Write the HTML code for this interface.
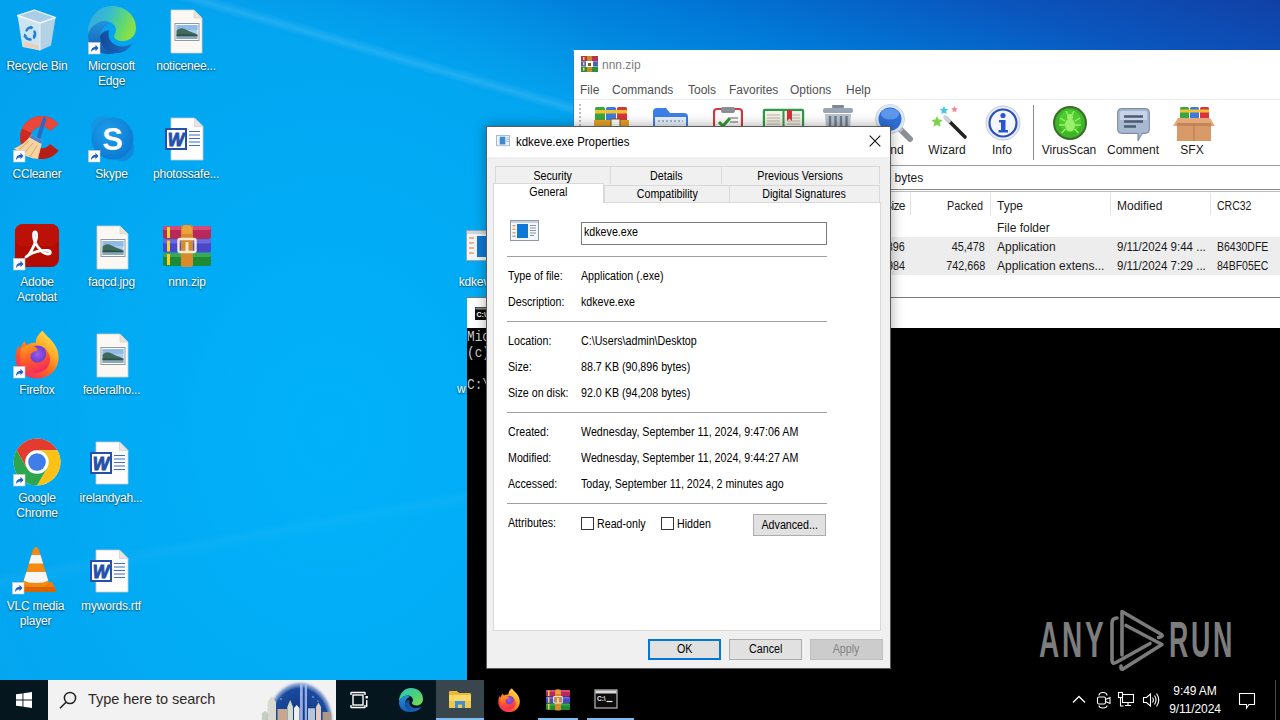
<!DOCTYPE html>
<html lang="en">
<head>
<meta charset="utf-8">
<title>kdkeve.exe Properties</title>
<style>
*{box-sizing:border-box;margin:0;padding:0}
html,body{width:1280px;height:720px;overflow:hidden}
body{position:relative;font-family:"Liberation Sans",sans-serif;font-size:12px;color:#000;
 background:
  linear-gradient(16.2deg, rgba(255,255,255,0) 70.6%, rgba(190,235,255,.16) 71.2%, rgba(255,255,255,0) 71.9%),
  linear-gradient(169.8deg, rgba(0,190,255,0) 60.3%, rgba(170,230,255,.05) 61.1%, rgba(0,190,255,.07) 62.2%, rgba(0,190,255,.07) 100%),
  radial-gradient(ellipse 420px 520px at 330px 430px, rgba(0,180,252,.9) 0%, rgba(0,178,250,0) 100%),
  linear-gradient(16.2deg, #04a3ee 0%, #03a2ee 70%, #0497e8 74%, #007ad8 83%, #0a56be 92%, #1140a6 100%);
}
.abs{position:absolute}
/* desktop icons */
.dico{position:absolute;width:76px;text-align:center;color:#fff;font-size:12px;line-height:15px;
 text-shadow:0 1px 1.500px rgba(0,0,0,.5),0 0 2px rgba(0,0,0,.28);letter-spacing:-.2px}
.dico svg text{text-shadow:none}
.dico svg{display:block;margin:0 auto 5px auto;overflow:visible}
/* taskbar */
#tb{position:absolute;left:0;top:680px;width:1280px;height:40px;background:#000;}
#tbl{position:absolute;left:0;top:0;width:467px;height:40px;background:#06161f}
#search{position:absolute;left:48px;top:0;width:288px;height:40px;background:#f2f2f2;overflow:hidden}
#search span{position:absolute;left:40px;top:11px;font-size:14.500px;color:#2b2b2b;letter-spacing:-.05px}
#tb2{position:absolute;left:0;top:680px;width:1280px;height:40px}
.clk{left:1160px;width:70px;text-align:center;color:#fff;font-size:12px;line-height:15px;white-space:nowrap;letter-spacing:-.1px}
#wm .w{position:absolute;top:611px;font-size:50.500px;line-height:57px;color:#7d7d7d;font-weight:bold;transform:scaleX(.53);transform-origin:0 50%;letter-spacing:5px;white-space:nowrap}
/* winrar */
#rar{position:absolute;left:573px;top:50px;width:720px;height:248px;background:#fff;border-left:1px solid #2a7fd8;border-top:1px solid #fff}
#rar .t{position:absolute;font-size:12px;color:#1a1a1a;white-space:nowrap}
#rar .m{top:32px;color:#505050}
#rar .r{transform:scaleX(.9);transform-origin:100% 50%}
#rar .d{transform:scaleX(.96);transform-origin:0 50%}
#rar .c{transform:scaleX(.875);transform-origin:0 50%}
#rar .tl{top:92px;width:70px;margin-left:-35px;text-align:center}
#rar .hs{top:142px;width:1px;height:22px;background:#e2e2e2}
/* console */
#con{position:absolute;left:467px;top:297px;width:830px;height:400px;background:#000;border-top:1px solid #7a7a7a}
#con .bar{position:absolute;left:0;top:0;right:0;height:30px;background:#fff}
#con pre{position:absolute;left:0;top:31px;font-family:"Liberation Mono",monospace;font-size:14.500px;line-height:16px;color:#ccc;transform:scaleX(.88);transform-origin:0 0}
/* dialog */
#dlg{position:absolute;left:486px;top:126px;width:405px;height:543px;background:#f0f0f0;border:1px solid #5a5a5a;box-shadow:0 0 12px rgba(0,0,0,.35);font-size:11px}
#dlg .title{position:absolute;left:0;top:0;right:0;height:30px;background:#fff}
#dlg .title span{position:absolute;left:29px;top:8px;font-size:12px;transform:scaleX(.955);transform-origin:0 50%;white-space:nowrap}
.tab{position:absolute;height:18px;background:#f0f0f0;border:1px solid #d9d9d9;border-bottom:none;text-align:center;font-size:12px;line-height:17px;white-space:nowrap}
#page{position:absolute;left:6px;top:75px;width:388px;height:429px;background:#fff;border:1px solid #d9d9d9}
.l,.v{position:absolute;font-size:12px;white-space:nowrap;transform-origin:0 50%;line-height:14px;transform:scaleX(.89)}
.sx{display:inline-block;transform:scaleX(.89);transform-origin:50% 50%}
.sep{position:absolute;left:20px;width:320px;height:1px;background:#a0a0a0}
.btn{position:absolute;width:73px;height:21px;background:#e1e1e1;border:1px solid #adadad;text-align:center;font-size:12px;line-height:19px}
.cb{position:absolute;width:13px;height:13px;background:#fff;border:1px solid #333}
</style>
</head>
<body>

<!-- DESKTOP-ICONS -->
<div class="dico" style="left:-1px;top:6px"><svg width="48" height="48" viewBox="0 0 48 48"><path d="M4.500 9.600 21.400 4 42.600 11.500 27 17z" fill="#a9cde6" stroke="#f4f9fc" stroke-width="1.200" stroke-linejoin="round"/><path d="M4.500 9.600 27 17V44.600L9.500 41z" fill="#dbe7f0" opacity=".93"/><path d="M27 17 42.600 11.500 38 39.600 27 44.600z" fill="#c2d5e4" opacity=".93"/><path d="M10.500 36 26 39.500V43.800L11 40.500z" fill="#f3c9ae" opacity=".8"/><path d="M4.500 9.600 27 17 42.600 11.500" fill="none" stroke="#f6fafd" stroke-width="1.300"/><path d="M27 17V44.600" stroke="#eef4f8" stroke-width=".8"/><g fill="none" stroke="#1f7fd6" stroke-width="2.400" stroke-linecap="round"><path d="M13.500 24.500q1.500-3.500 5-3"/><path d="M21.500 25.500q1.500 3 -.500 6"/><path d="M17.500 33.500q-4 0-5.500-3.500"/></g><path d="M17.500 19.500l3 2.200-3.300 1.800zM23.300 29.500l-2.600 2.800-1-3.600zM10.500 31l1-3.800 2.500 2.800z" fill="#1f7fd6"/></svg>Recycle Bin</div>
<div class="dico" style="left:73.5px;top:6px"><svg width="48" height="48" viewBox="0 0 48 48"><defs><linearGradient id="e1" x1="0" y1="0" x2="1" y2=".35"><stop offset="0" stop-color="#3aa4e2"/><stop offset=".45" stop-color="#35bcd0"/><stop offset=".8" stop-color="#5fd873"/><stop offset="1" stop-color="#86e04a"/></linearGradient><linearGradient id="e2" x1="0" y1="0" x2="0" y2="1"><stop offset="0" stop-color="#2592dc"/><stop offset="1" stop-color="#0f5cae"/></linearGradient><linearGradient id="e3" x1="0" y1="0" x2="1" y2="0"><stop offset="0" stop-color="#15499a"/><stop offset="1" stop-color="#1a74cc"/></linearGradient></defs><path d="M24 0C37 0 48 9 48 22c0 8-6 13-13 13-5 0-9-2-9-5 0-2 2-3 2-6 0-5-5-9-11-9C9 15 3 21 0 27 0 12 10 0 24 0z" fill="url(#e1)"/><path d="M17 15c-9 0-17 8-17 16 1 10 10 17 21 17 4 0 8-1 11-3-12 2-20-6-20-14 0-6 4-11 9-13-1-2-2-3-4-3z" fill="url(#e2)"/><path d="M12 31c0 10 9 17 19 16 6-1 11-5 14-10-4 3-10 4-15 3-7-2-11-8-9-16-5 1-9 4-9 7z" fill="url(#e3)"/><g transform="translate(0,36)"><rect x=".5" y=".5" width="11.5" height="11.5" fill="#fff" stroke="#c8c8c8" stroke-width=".6"/><path d="M3 10q0-5 4.500-5.200V2.800L10.500 6 7.500 9.200V7.200Q4.500 7.200 3 10z" fill="#1e5fc4"/></g></svg>Microsoft<br>Edge</div>
<div class="dico" style="left:148px;top:6px"><svg width="48" height="48" viewBox="0 0 48 48"><path d="M9 4h23l8 8v35H9z" fill="#fbf8f4" stroke="#d2cdc6" stroke-width=".8"/><path d="M32 4v8h8z" fill="#e9e2d8" stroke="#d2cdc6" stroke-width=".6"/><rect x="13" y="17.500" width="24" height="17" fill="#fff" stroke="#8f99a6" stroke-width="1"/><rect x="14.500" y="19" width="21" height="14" fill="#a9cdec"/><path d="M14.500 19h21v5h-21z" fill="#8fbbe6"/><path d="M14.500 24.500q4-3.500 8-1.500t13 5.500v1h-21z" fill="#3f6a5c"/><path d="M14.500 29h21v4h-21z" fill="#86a8b8"/><path d="M14.500 28.500q8-1 21 .8v.9h-21z" fill="#2f4f4a"/></svg>noticenee...</div>
<div class="dico" style="left:-1px;top:114px"><svg width="48" height="48" viewBox="0 0 48 48"><path d="M45.440 10.260A21.500 21.500 0 1 0 45.440 36.740L37.170 30.270A11 11 0 1 1 37.170 16.730z" fill="#cf2a20"/><path d="M45.440 10.260A21.500 21.500 0 0 0 9 14.500L18.500 19A11 11 0 0 1 37.170 16.730z" fill="#e8473a"/><path d="M45.440 36.740A21.500 21.500 0 0 1 20 43.200L24 33.500A11 11 0 0 0 37.170 30.270z" fill="#b81e18"/><path d="M31.500 5 25 26" stroke="#2a6bc2" stroke-width="3.800" stroke-linecap="round"/><path d="M18.500 20.500 29.500 26.500 25 45Q14 45 1 34.500 12 30 18.500 20.500z" fill="#f6d3a0"/><path d="M18.500 20.500 29.500 26.500 28.500 30 16.500 23.500z" fill="#3f86d6"/><path d="M6 35.500 16 27M11 39.500 20 29M17 43 24 31.500" stroke="#d9a868" stroke-width="1"/><g transform="translate(0,36)"><rect x=".5" y=".5" width="11.5" height="11.5" fill="#fff" stroke="#c8c8c8" stroke-width=".6"/><path d="M3 10q0-5 4.500-5.200V2.800L10.500 6 7.500 9.200V7.200Q4.500 7.200 3 10z" fill="#1e5fc4"/></g></svg>CCleaner</div>
<div class="dico" style="left:73.5px;top:114px"><svg width="48" height="48" viewBox="0 0 48 48"><defs><radialGradient id="sk" cx=".4" cy=".35" r=".75"><stop offset="0" stop-color="#1e9fea"/><stop offset="1" stop-color="#0874d0"/></radialGradient></defs><circle cx="15" cy="14" r="12" fill="#1596e2"/><circle cx="34" cy="35" r="12" fill="#0f8adc"/><circle cx="24.500" cy="24.500" r="21" fill="url(#sk)"/><text x="24.500" y="36" font-family="Liberation Sans,sans-serif" font-weight="bold" font-size="31" fill="#fff" text-anchor="middle">S</text><g transform="translate(0,36)"><rect x=".5" y=".5" width="11.5" height="11.5" fill="#fff" stroke="#c8c8c8" stroke-width=".6"/><path d="M3 10q0-5 4.500-5.200V2.800L10.500 6 7.500 9.200V7.200Q4.500 7.200 3 10z" fill="#1e5fc4"/></g></svg>Skype</div>
<div class="dico" style="left:148px;top:114px"><svg width="48" height="48" viewBox="0 0 48 48"><path d="M9 4h23.500l8.500 8.500V46H9z" fill="#fdfdfd" stroke="#c9c9c9" stroke-width=".8"/><path d="M32.500 4v8.500H41z" fill="#e6e6e6" stroke="#c9c9c9" stroke-width=".6"/><path d="M27 17.500h11M27 21h11M27 24.500h11M27 28h11M27 31.500h11" stroke="#3f6fc0" stroke-width="1.100"/><rect x="4" y="15" width="20" height="20" fill="#fdfdfd" stroke="#2450aa" stroke-width="2"/><text x="14" y="31.500" font-family="Liberation Sans,sans-serif" font-weight="bold" font-style="italic" font-size="17.500" fill="#2450aa" stroke="#2450aa" stroke-width=".9" text-anchor="middle">W</text></svg>photossafe...</div>
<div class="dico" style="left:-1px;top:222px"><svg width="48" height="48" viewBox="0 0 48 48"><rect x="2" y="2" width="44" height="43" rx="8" fill="#b30b00"/><rect x="2" y="2" width="44" height="22" rx="8" fill="#c2160c" opacity=".6"/><path d="M13 35c3-1 8-10 10-17 1-4 1-8-1-8s-2 5 0 10c3 7 9 12 13 12 3 0 3-3 0-3.500-6-1-17 2-22 6.500z" fill="none" stroke="#fff" stroke-width="2.800" stroke-linejoin="round"/><g transform="translate(0,36)"><rect x=".5" y=".5" width="11.5" height="11.5" fill="#fff" stroke="#c8c8c8" stroke-width=".6"/><path d="M3 10q0-5 4.500-5.200V2.800L10.500 6 7.500 9.200V7.200Q4.500 7.200 3 10z" fill="#1e5fc4"/></g></svg>Adobe<br>Acrobat</div>
<div class="dico" style="left:73.5px;top:222px"><svg width="48" height="48" viewBox="0 0 48 48"><path d="M9 4h23l8 8v35H9z" fill="#fbf8f4" stroke="#d2cdc6" stroke-width=".8"/><path d="M32 4v8h8z" fill="#e9e2d8" stroke="#d2cdc6" stroke-width=".6"/><rect x="13" y="17.500" width="24" height="17" fill="#fff" stroke="#8f99a6" stroke-width="1"/><rect x="14.500" y="19" width="21" height="14" fill="#a9cdec"/><path d="M14.500 19h21v5h-21z" fill="#8fbbe6"/><path d="M14.500 24.500q4-3.500 8-1.500t13 5.500v1h-21z" fill="#3f6a5c"/><path d="M14.500 29h21v4h-21z" fill="#86a8b8"/><path d="M14.500 28.500q8-1 21 .8v.9h-21z" fill="#2f4f4a"/></svg>faqcd.jpg</div>
<div class="dico" style="left:149px;top:222px"><svg width="48" height="48" viewBox="0 0 48 48"><rect x="0" y="4" width="48" height="13" rx="2" fill="#b8285a"/><rect x="0" y="4" width="48" height="4" rx="2" fill="#d44a78"/><rect x="0" y="17.500" width="48" height="13" rx="2" fill="#4a48c8"/><rect x="0" y="17.500" width="48" height="4" rx="2" fill="#6a6ae0"/><rect x="0" y="31" width="48" height="13" rx="2" fill="#1f8a34"/><rect x="0" y="31" width="48" height="4" rx="2" fill="#3aaa4e"/><rect x="4" y="5" width="3" height="11" fill="#f2d23a"/><rect x="4" y="18.500" width="3" height="11" fill="#f2d23a"/><rect x="4" y="32" width="3" height="11" fill="#f2d23a"/><rect x="18" y="3" width="12" height="42" rx="2" fill="#d98a2a"/><path d="M19 8q0-5 5-5t5 5v4H19z" fill="#e9a23c"/><rect x="15.500" y="17" width="17" height="13" rx="1.500" fill="none" stroke="#f4ead0" stroke-width="2.400"/><rect x="22.500" y="20" width="3" height="9" fill="#f4ead0"/></svg>nnn.zip</div>
<div class="dico" style="left:-1px;top:330px"><svg width="48" height="48" viewBox="0 0 48 48"><defs><linearGradient id="ff" x1=".85" y1=".05" x2=".2" y2=".95"><stop offset="0" stop-color="#ffe14a"/><stop offset=".3" stop-color="#ffb02a"/><stop offset=".6" stop-color="#ff6a1e"/><stop offset="1" stop-color="#ef2a68"/></linearGradient><linearGradient id="ff2" x1=".2" y1="0" x2=".6" y2="1"><stop offset="0" stop-color="#ff9a1e"/><stop offset=".5" stop-color="#ff5a26"/><stop offset="1" stop-color="#f02a62"/></linearGradient><radialGradient id="fp" cx=".5" cy=".4" r=".6"><stop offset="0" stop-color="#9a5cf0"/><stop offset="1" stop-color="#5a2fb8"/></radialGradient></defs><path d="M30 1C33 6 36 7 39 11c5 6 7 12 6.500 18C45 40 36 48.500 24 48.500S2.500 39.500 2.500 28c0-5 1-9 3.500-13 0 2 .5 3 1.500 4 .5-4 2-6 4.500-8 0 2 1 3 2 4 3-2 6-2.500 9-2-1-4 2-8 6-12z" fill="url(#ff)"/><circle cx="24.500" cy="26" r="10.500" fill="url(#fp)"/><path d="M8 19c4-4 10-4.500 15-1.500 2 1.500 2 3 0 3.500-3 .5-5 2-5.500 4.500-.5 4 3 7.500 7.500 7 4.500-.5 8-4 8-8.500 0-2-.5-4-1.500-5 4 3 6 7 5.500 12-1 7-7 12-14 12-8 0-15-6-15.500-14-.2-4 .0-6.500 .5-9.500z" fill="url(#ff2)"/><g transform="translate(0,36)"><rect x=".5" y=".5" width="11.5" height="11.5" fill="#fff" stroke="#c8c8c8" stroke-width=".6"/><path d="M3 10q0-5 4.500-5.200V2.800L10.500 6 7.500 9.200V7.200Q4.500 7.200 3 10z" fill="#1e5fc4"/></g></svg>Firefox</div>
<div class="dico" style="left:73.5px;top:330px"><svg width="48" height="48" viewBox="0 0 48 48"><path d="M9 4h23l8 8v35H9z" fill="#fbf8f4" stroke="#d2cdc6" stroke-width=".8"/><path d="M32 4v8h8z" fill="#e9e2d8" stroke="#d2cdc6" stroke-width=".6"/><rect x="13" y="17.500" width="24" height="17" fill="#fff" stroke="#8f99a6" stroke-width="1"/><rect x="14.500" y="19" width="21" height="14" fill="#a9cdec"/><path d="M14.500 19h21v5h-21z" fill="#8fbbe6"/><path d="M14.500 24.500q4-3.500 8-1.500t13 5.500v1h-21z" fill="#3f6a5c"/><path d="M14.500 29h21v4h-21z" fill="#86a8b8"/><path d="M14.500 28.500q8-1 21 .8v.9h-21z" fill="#2f4f4a"/></svg>federalho...</div>
<div class="dico" style="left:-1px;top:438px"><svg width="48" height="48" viewBox="0 0 48 48"><circle cx="24" cy="24" r="23.500" fill="#fff"/><path d="M3.650 12.250A23.500 23.500 0 0 1 44.350 12.250L24 12.250A11.750 11.750 0 0 0 13.820 29.875z" fill="#e33b2e"/><path d="M44.350 12.250A23.500 23.500 0 0 1 24 47.500L34.180 29.875A11.750 11.750 0 0 0 24 12.250z" fill="#fbc116"/><path d="M24 47.500A23.500 23.500 0 0 1 3.650 12.250L13.820 29.875A11.750 11.750 0 0 0 34.180 29.875z" fill="#2da44e"/><circle cx="24" cy="24" r="11" fill="#fff"/><circle cx="24" cy="24" r="8.800" fill="#3f7ee8"/><g transform="translate(0,36)"><rect x=".5" y=".5" width="11.5" height="11.5" fill="#fff" stroke="#c8c8c8" stroke-width=".6"/><path d="M3 10q0-5 4.500-5.200V2.800L10.500 6 7.500 9.200V7.200Q4.500 7.200 3 10z" fill="#1e5fc4"/></g></svg>Google<br>Chrome</div>
<div class="dico" style="left:73px;top:438px"><svg width="48" height="48" viewBox="0 0 48 48"><path d="M9 4h23.500l8.500 8.500V46H9z" fill="#fdfdfd" stroke="#c9c9c9" stroke-width=".8"/><path d="M32.500 4v8.500H41z" fill="#e6e6e6" stroke="#c9c9c9" stroke-width=".6"/><path d="M27 17.500h11M27 21h11M27 24.500h11M27 28h11M27 31.500h11" stroke="#3f6fc0" stroke-width="1.100"/><rect x="4" y="15" width="20" height="20" fill="#fdfdfd" stroke="#2450aa" stroke-width="2"/><text x="14" y="31.500" font-family="Liberation Sans,sans-serif" font-weight="bold" font-style="italic" font-size="17.500" fill="#2450aa" stroke="#2450aa" stroke-width=".9" text-anchor="middle">W</text></svg>irelandyah...</div>
<div class="dico" style="left:-2.5px;top:546px"><svg width="48" height="48" viewBox="0 0 48 48"><path d="M5 46q-2 0-1-2l4-8h32l4 8q1 2-1 2z" fill="#f07a0a"/><path d="M5 46q-2 0-1-2l1.500-3h37l1.500 3q1 2-1 2z" fill="#d96400"/><path d="M24 1q2 0 3 3l10 33q-3 4-13 4T11 37L21 4q1-3 3-3z" fill="#f58a12"/><path d="M19.500 9h9l2.600 8.500H16.900z" fill="#f6f6f6"/><path d="M14.300 26h19.400l2.500 8.500q-4 2.500-12.200 2.500t-12.200-2.500z" fill="#f6f6f6"/><g transform="translate(0,36)"><rect x=".5" y=".5" width="11.5" height="11.5" fill="#fff" stroke="#c8c8c8" stroke-width=".6"/><path d="M3 10q0-5 4.500-5.200V2.800L10.500 6 7.500 9.200V7.200Q4.500 7.200 3 10z" fill="#1e5fc4"/></g></svg>VLC media<br>player</div>
<div class="dico" style="left:73px;top:546px"><svg width="48" height="48" viewBox="0 0 48 48"><path d="M9 4h23.500l8.500 8.500V46H9z" fill="#fdfdfd" stroke="#c9c9c9" stroke-width=".8"/><path d="M32.500 4v8.500H41z" fill="#e6e6e6" stroke="#c9c9c9" stroke-width=".6"/><path d="M27 17.500h11M27 21h11M27 24.500h11M27 28h11M27 31.500h11" stroke="#3f6fc0" stroke-width="1.100"/><rect x="4" y="15" width="20" height="20" fill="#fdfdfd" stroke="#2450aa" stroke-width="2"/><text x="14" y="31.500" font-family="Liberation Sans,sans-serif" font-weight="bold" font-style="italic" font-size="17.500" fill="#2450aa" stroke="#2450aa" stroke-width=".9" text-anchor="middle">W</text></svg>mywords.rtf</div>
<div class="dico" style="left:450px;top:222px"><svg width="48" height="48" viewBox="0 0 48 48"><rect x="2.500" y="8.500" width="42" height="30" fill="#f1f4f8" stroke="#9aa4ae"/><rect x="3" y="9" width="41" height="3" fill="#cfd8e2"/><rect x="13" y="14" width="17" height="21" fill="#0f78d4"/><path d="M5 16h5M5 21h5M5 26h5M5 31h5" stroke="#e8a064" stroke-width="1.600"/><path d="M33 16h9M33 19.500h9M33 23h9M33 26.500h9M33 30h6" stroke="#8b949e" stroke-width="1.200"/></svg>kdkeve.exe</div>
<div class="dico" id="wlab" style="left:457px;top:382px;width:auto;text-align:left">w</div>
<!-- /DESKTOP-ICONS -->

<!-- WINRAR -->
<div id="rar">

<svg class="abs" style="left:7px;top:5px" width="17" height="16" viewBox="0 0 17 16"><rect x="0" y="0" width="17" height="5" fill="#b8324a"/><rect x="0" y="5.3" width="17" height="5" fill="#4a5fc0"/><rect x="0" y="10.6" width="17" height="5.4" fill="#2f8f3c"/><rect x="6" y="0" width="5" height="16" fill="#c98a2a"/><rect x="5" y="5" width="7" height="6" fill="#fff"/><rect x="7" y="7" width="3" height="3" fill="#7a5a20"/><rect x="2" y="1" width="1.5" height="3" fill="#ffd86b"/><rect x="2" y="6.3" width="1.5" height="3" fill="#ffd86b"/><rect x="2" y="11.6" width="1.5" height="3" fill="#ffd86b"/></svg>
<div class="t" style="left:28px;top:7px;color:#7d7d7d;font-size:12px">nnn.zip</div>
<div class="t m" style="left:6px">File</div><div class="t m" style="left:38px">Commands</div><div class="t m" style="left:114px">Tools</div><div class="t m" style="left:155px">Favorites</div><div class="t m" style="left:216px">Options</div><div class="t m" style="left:272px">Help</div>
<div class="abs" style="left:0;top:48px;width:720px;height:1px;background:#ececec"></div>
<div class="abs" style="left:5px;top:53px;width:2px;height:58px;background:repeating-linear-gradient(#bdbdbd 0 2px,#fff 2px 4px)"></div>

<svg class="abs" style="left:20px;top:55px" width="36" height="36" viewBox="0 0 36 36"><rect x="1" y="1" width="10" height="22" rx="1.5" fill="#3aa63f"/><rect x="12" y="1" width="10" height="22" rx="1.5" fill="#3b7be0"/><rect x="23" y="1" width="10" height="22" rx="1.5" fill="#d8343f"/><rect x="1" y="4" width="32" height="3.5" fill="#f2c230"/><rect x="0" y="14" width="35" height="8" fill="#e8a326"/><rect x="0" y="23" width="35" height="11" fill="#d88a1e"/><rect x="17" y="13" width="9" height="8" fill="#fff" stroke="#7a5a20"/></svg>
<svg class="abs" style="left:78px;top:55px" width="37" height="36" viewBox="0 0 37 36"><path d="M1 6q0-4 4-4h9l4 5h14q4 0 4 4v22H1z" fill="#3d7fe6"/><rect x="3" y="11" width="31" height="9" fill="#e8f2ff"/><path d="M6 15h25" stroke="#8aa" stroke-width="1.5" stroke-dasharray="2 2"/><rect x="1" y="20" width="35" height="14" fill="#5b9bf5"/></svg>
<svg class="abs" style="left:139px;top:56px" width="30" height="36" viewBox="0 0 30 36"><rect x="1" y="2" width="28" height="33" rx="3" fill="#fff" stroke="#d23a3f" stroke-width="2.2"/><rect x="8" y="0" width="14" height="6" rx="2" fill="#8a8f96"/><path d="M6 15l4 4 7-8" stroke="#3a9a36" stroke-width="3" fill="none"/><path d="M17 11h8M17 15h8" stroke="#999" stroke-width="1.3"/></svg>
<svg class="abs" style="left:188px;top:57px" width="43" height="34" viewBox="0 0 43 34"><rect x=".8" y=".8" width="41.4" height="32" rx="2" fill="#2e9a48"/><rect x="3" y="3" width="17.5" height="28" fill="#f4f1e6"/><rect x="22.500" y="3" width="17.5" height="28" fill="#f4f1e6"/><path d="M5 7h13M5 10h13M5 13h13M5 16h13M25 7h13M25 10h13M25 13h13M25 16h13" stroke="#b9b5a5" stroke-width="1"/><path d="M25 2h5v11l-2.500-2.500L25 13z" fill="#d62f3a"/></svg>
<svg class="abs" style="left:248px;top:54px" width="32" height="38" viewBox="0 0 32 38"><rect x="10" y="0" width="12" height="3" rx="1" fill="#7f8a96"/><rect x="1" y="3" width="30" height="5" rx="2" fill="#9aa6b3"/><path d="M3 9h26l-2 28H5z" fill="#b9c3ce"/><path d="M8 11v24M13.500 11v24M19 11v24M24.500 11v24" stroke="#6f7b88" stroke-width="2.4"/></svg>
<svg class="abs" style="left:299px;top:52px" width="42" height="40" viewBox="0 0 42 40"><path d="M26 25l11 11" stroke="#8b8f96" stroke-width="6" stroke-linecap="round"/><path d="M24 23l5 5" stroke="#b9bec6" stroke-width="4"/><circle cx="17" cy="16" r="14.500" fill="#dfe9f7" stroke="#c9d4e4" stroke-width="1"/><circle cx="17" cy="16" r="11.500" fill="#2f6fd6"/><ellipse cx="17" cy="11" rx="9" ry="5.500" fill="#5f98ea"/></svg>
<svg class="abs" style="left:353px;top:54px" width="42" height="36" viewBox="0 0 42 36"><path d="M19 13l19 19" stroke="#222" stroke-width="3.600" stroke-linecap="round"/><path d="M18 12l4 4" stroke="#d0d4da" stroke-width="3.800" stroke-linecap="round"/><path d="M10 11l1.700 3.600 3.900.5-2.900 2.700.8 3.900L10 19.800 6.500 21.700l.8-3.900-2.900-2.700 3.900-.5z" fill="#7fd24a"/><path d="M17 1l1.300 2.700 3 .4-2.200 2 .6 3L17 7.700l-2.700 1.400.6-3-2.200-2 3-.4z" fill="#47c6e8"/><path d="M27.500 1l1 2.100 2.300.3-1.700 1.600.4 2.300-2-1.100-2 1.100.4-2.300-1.700-1.600 2.300-.3z" fill="#f08aa0"/></svg>
<svg class="abs" style="left:411px;top:54px" width="36" height="36" viewBox="0 0 36 36"><circle cx="18" cy="18" r="17" fill="#e6ebf5" stroke="#c2cbe0" stroke-width="1"/><circle cx="18" cy="18" r="13.500" fill="#f4f7fd" stroke="#2d4fb8" stroke-width="2.200"/><circle cx="18" cy="10.500" r="2.600" fill="#2a55d0"/><path d="M14 15h6.500v10H23v2.500H13.500V25H16v-7.500h-2z" fill="#2a55d0"/></svg>
<svg class="abs" style="left:478px;top:54px" width="36" height="36" viewBox="0 0 36 36"><circle cx="18" cy="18" r="17" fill="#3a6b2a"/><circle cx="18" cy="18" r="15" fill="#3fb52a"/><circle cx="18" cy="16" r="11" fill="#58d436" opacity=".7"/><ellipse cx="18" cy="20" rx="5" ry="6.500" fill="#9af06a"/><circle cx="18" cy="12" r="3" fill="#9af06a"/><path d="M13 16l-5-3M23 16l5-3M13 20H7M23 20h6M13.500 24l-4 4M22.500 24l4 4M16 10l-2-4M20 10l2-4" stroke="#9af06a" stroke-width="1.400"/></svg>
<svg class="abs" style="left:543px;top:57px" width="33" height="34" viewBox="0 0 33 34"><path d="M5 .7h23q4.300 0 4.300 4.300v16q0 4.300-4.300 4.300h-3l-4 7.500V25.300H5q-4.300 0-4.300-4.300V5Q.7.700 5 .7z" fill="#a9b9d2" stroke="#7e8fae" stroke-width="1.200"/><path d="M5 3h23q2 0 2 2v7H3V5q0-2 2-2z" fill="#c7d3e6"/><path d="M7 8.500h19M7 13.500h19M7 18.500h12" stroke="#4c5a73" stroke-width="2.400"/></svg>
<svg class="abs" style="left:598px;top:55px" width="44" height="36" viewBox="0 0 44 36"><rect x="8" y="1" width="9" height="14" rx="1.500" fill="#3aa63f"/><rect x="18" y="1" width="9" height="14" rx="1.500" fill="#3b7be0"/><rect x="28" y="1" width="9" height="14" rx="1.500" fill="#d8343f"/><rect x="8" y="3.500" width="29" height="3" fill="#f2c230"/><path d="M6 12h32l5 8H1z" fill="#e2a878"/><rect x="5" y="17" width="34" height="18" fill="#d99a6a"/><rect x="5" y="17" width="34" height="3" fill="#c5855a"/><path d="M22 17v18" stroke="#b87850" stroke-width="1"/></svg>

<div class="t tl" style="left:318px">Find</div><div class="t tl" style="left:373px">Wizard</div><div class="t tl" style="left:428px">Info</div><div class="t tl" style="left:495px">VirusScan</div><div class="t tl" style="left:559px">Comment</div><div class="t tl" style="left:618px">SFX</div>
<div class="abs" style="left:459px;top:54px;width:1px;height:55px;background:#8c8c8c"></div>
<div class="abs" style="left:0;top:114px;width:720px;height:1px;background:#9a9a9a"></div>
<div class="t" style="left:310.500px;top:120px">0 bytes</div>
<div class="abs" style="left:0;top:138px;width:720px;height:1px;background:#8a8a8a"></div>
<div class="abs" style="left:0;top:140px;width:720px;height:1px;background:#bdbdbd"></div>
<div class="abs" style="left:0;top:186px;width:720px;height:38px;background:#ededed"></div>
<div class="abs hs" style="left:336px"></div><div class="abs hs" style="left:416px"></div><div class="abs hs" style="left:536px"></div><div class="abs hs" style="left:636px"></div>
<div class="t" style="left:310px;top:148px;letter-spacing:-.6px">Size</div><div class="t r" style="right:310px;top:148px">Packed</div><div class="t" style="left:423px;top:148px">Type</div><div class="t" style="left:543px;top:148px">Modified</div><div class="t c" style="left:643px;top:148px">CRC32</div>
<div class="t" style="left:423px;top:170px">File folder</div>
<div class="t r" style="right:388px;top:189px">90,896</div><div class="t r" style="right:308px;top:189px">45,478</div><div class="t" style="left:423px;top:189px">Application</div><div class="t d" style="left:543px;top:189px">9/11/2024 9:44 ...</div><div class="t c" style="left:643px;top:189px">B6430DFE</div>
<div class="t r" style="right:388px;top:208px">984</div><div class="t r" style="right:308px;top:208px">742,668</div><div class="t" style="left:423px;top:208px">Application extens...</div><div class="t d" style="left:543px;top:208px">9/11/2024 7:29 ...</div><div class="t c" style="left:643px;top:208px">84BF05EC</div>

</div>

<!-- CONSOLE -->
<div id="con"><div class="bar"><svg class="abs" style="left:8px;top:9px" width="16" height="13" viewBox="0 0 16 13"><rect width="16" height="13" fill="#0c0c0c"/><rect x=".5" y=".5" width="15" height="2" fill="#8a8a8a"/><text x="1.500" y="10" font-family="Liberation Sans,sans-serif" font-size="7" font-weight="bold" fill="#fff">C:\</text></svg></div>
<pre>Microsoft Windows
(c) Microsoft

C:\Users</pre></div>

<!-- DIALOG -->
<div id="dlg">

<div class="title"><svg class="abs" style="left:9px;top:8px" width="14" height="12" viewBox="0 0 15 14" preserveAspectRatio="none" opacity=".85"><rect x=".5" y=".5" width="14" height="12" fill="#e8f1fa" stroke="#9aa7b4"/><rect x="4" y="2" width="6" height="9" fill="#1976d2"/><rect x="11" y="3" width="3" height="1" fill="#9aa7b4"/><rect x="11" y="5" width="3" height="1" fill="#9aa7b4"/><rect x="11" y="7" width="3" height="1" fill="#9aa7b4"/></svg><span>kdkeve.exe Properties</span>
<svg class="abs" style="left:382px;top:8px" width="12" height="12" viewBox="0 0 12 12"><path d="M.7.7 11.3 11.3M11.3.7.7 11.3" stroke="#111" stroke-width="1.1" fill="none"/></svg></div>
<div class="tab" style="left:8px;top:39px;width:116px;padding-top:1px"><span class="sx">Security</span></div>
<div class="tab" style="left:123px;top:39px;width:112px;padding-top:1px"><span class="sx">Details</span></div>
<div class="tab" style="left:234px;top:39px;width:159px;padding-top:1px"><span class="sx">Previous Versions</span></div>
<div class="tab" style="left:117px;top:58px;width:126px"><span class="sx">Compatibility</span></div>
<div class="tab" style="left:242px;top:58px;width:151px"><span class="sx">Digital Signatures</span></div>
<div id="page"></div>
<div class="tab" style="left:6px;top:56px;width:111px;height:20px;background:#fff;line-height:16px"><span class="sx">General</span></div>
<svg class="abs" style="left:23px;top:93px" width="29" height="22" viewBox="0 0 29 22"><rect x=".5" y=".5" width="28" height="20" fill="#f3f6fa" stroke="#8e99a5"/><rect x="1" y="1" width="27" height="2" fill="#c9d3de"/><rect x="7" y="4" width="11" height="14" fill="#0f78d4"/><rect x="2.5" y="5" width="3" height="1.5" fill="#e8a064"/><rect x="2.5" y="8.5" width="3" height="1.5" fill="#e8a064"/><rect x="2.5" y="12" width="3" height="1.5" fill="#e8a064"/><rect x="2.5" y="15.5" width="3" height="1.5" fill="#9ab"/><rect x="20" y="5" width="6" height="1" fill="#8b949e"/><rect x="20" y="7.5" width="6" height="1" fill="#8b949e"/><rect x="20" y="10" width="6" height="1" fill="#8b949e"/><rect x="20" y="12.5" width="6" height="1" fill="#8b949e"/><rect x="20" y="15" width="4" height="1" fill="#8b949e"/></svg>
<div class="abs" style="left:94px;top:95px;width:246px;height:23px;background:#fff;border:1px solid #7a7a7a"></div>
<div class="v" style="left:97px;top:98px">kdkeve.exe</div>
<div class="sep" style="top:129px"></div>
<div class="l" style="left:21px;top:142px">Type of file:</div><div class="v" style="left:94px;top:142px">Application (.exe)</div>
<div class="l" style="left:21px;top:168px">Description:</div><div class="v" style="left:94px;top:168px">kdkeve.exe</div>
<div class="sep" style="top:194px"></div>
<div class="l" style="left:21px;top:207px">Location:</div><div class="v" style="left:94px;top:207px">C:\Users\admin\Desktop</div>
<div class="l" style="left:21px;top:233px">Size:</div><div class="v" style="left:94px;top:233px">88.7 KB (90,896 bytes)</div>
<div class="l" style="left:21px;top:259px">Size on disk:</div><div class="v" style="left:94px;top:259px">92.0 KB (94,208 bytes)</div>
<div class="sep" style="top:285px"></div>
<div class="l" style="left:21px;top:298px">Created:</div><div class="v" style="left:94px;top:298px">Wednesday, September 11, 2024, 9:47:06 AM</div>
<div class="l" style="left:21px;top:324px">Modified:</div><div class="v" style="left:94px;top:324px">Wednesday, September 11, 2024, 9:44:27 AM</div>
<div class="l" style="left:21px;top:350px">Accessed:</div><div class="v" style="left:94px;top:350px">Today, September 11, 2024, 2 minutes ago</div>
<div class="sep" style="top:376px"></div>
<div class="l" style="left:21px;top:389px">Attributes:</div>
<div class="cb" style="left:94px;top:390px"></div><div class="v" style="left:110px;top:390px">Read-only</div>
<div class="cb" style="left:174px;top:390px"></div><div class="v" style="left:190px;top:390px">Hidden</div>
<div class="btn" style="left:266px;top:387px;height:22px;line-height:20px"><span class="sx">Advanced...</span></div>
<div class="btn" style="left:161px;top:512px;border:2px solid #0078d7;line-height:17px"><span class="sx">OK</span></div>
<div class="btn" style="left:242px;top:512px"><span class="sx">Cancel</span></div>
<div class="btn" style="left:323px;top:512px;background:#cccccc;border-color:#bfbfbf;color:#838383"><span class="sx">Apply</span></div>

</div>

<!-- WATERMARK -->
<div id="wm">
<div class="w" style="left:1038.500px;transform:scaleX(.555)">ANY</div>
<svg class="abs" style="left:1108px;top:608px" width="58" height="66" viewBox="0 0 58 66"><g fill="none" stroke="#7b7b7b" stroke-width="3.600" stroke-linejoin="round" stroke-linecap="round"><path d="M14 47V3.500L53.500 26.500Q55.500 28.500 50.500 29.500"/><path d="M18 17.500 54 36.500 15 61Q12.500 62 13 58"/><path d="M9 10Q4 10 4 15V52Q4 56.500 8 54.500L42 35.500"/></g></svg>
<div class="w" style="left:1169px">RUN</div>
</div>

<!-- TASKBAR -->
<div id="tb"><div id="tbl"></div>
<div id="search"><span>Type here to search</span></div>

<svg class="abs" style="left:16px;top:12px" width="16" height="16" viewBox="0 0 16 16"><path d="M0 2.300 6.500 1.400V7.500H0zM7.400 1.300 16 0V7.500H7.400zM0 8.400H6.500V14.600L0 13.700zM7.400 8.400H16V16L7.400 14.700z" fill="#fff"/></svg>
<svg class="abs" style="left:593px;top:9px" width="26" height="22" viewBox="0 0 26 22"><rect x="2" y="1" width="22" height="18" fill="#0c0c0c" stroke="#b9b9b9" stroke-width="1.200"/><rect x="2.500" y="1.500" width="21" height="3" fill="#d8d8d8"/><text x="4" y="12" font-family="Liberation Sans,sans-serif" font-size="6.500" font-weight="bold" fill="#e8e8e8">C:\</text><path d="M13.500 12.500h6" stroke="#eee" stroke-width="1.200"/></svg>

<svg class="abs" style="left:58px;top:10px" width="20" height="20" viewBox="0 0 20 20"><circle cx="12" cy="8" r="5.600" fill="none" stroke="#222" stroke-width="1.500"/><path d="M8 12.200 2 18.200" stroke="#222" stroke-width="1.600"/></svg>
<svg class="abs" style="left:258px;top:0" width="78" height="40" viewBox="0 0 78 40"><defs><radialGradient id="cty" cx="42" cy="42" r="42" gradientUnits="userSpaceOnUse" gradientTransform="translate(42 42) scale(.83 1) translate(-42 -42)"><stop offset="0" stop-color="#10347e"/><stop offset=".8" stop-color="#1a4a9e"/><stop offset=".9" stop-color="#5f84c4" stop-opacity=".7"/><stop offset="1" stop-color="#f2f2f2" stop-opacity="0"/></radialGradient></defs><rect width="78" height="40" fill="url(#cty)"/><path d="M42 4h2.800v36H42zM46.700 4H49v36h-2.300z" fill="#a3b8ea" opacity=".9"/><path d="M9.600 40V22l4.200-6 4.200 6v18z" fill="#d9d9d2"/><rect x="19.500" y="29" width="9.500" height="11" fill="#c8a78e"/><path d="M29.300 40V27l2.850-7 2.850 7v13z" fill="#d4dccc"/><path d="M36 40V28l2.750-3 2.750 3v12z" fill="#eef0f2"/><rect x="50" y="28.300" width="7" height="11.700" fill="#b4c6d8"/><path d="M58 40V27l2.500-4.500L63 27v13z" fill="#e2cbbb"/><rect x="64.500" y="32" width="8.500" height="8" fill="#ad9684"/><path d="M4 40V33l3-2 3 2v7z" fill="#b9c4b4" opacity=".8"/><circle cx="23" cy="19" r=".7" fill="#cfe0ff"/><circle cx="18" cy="12" r=".6" fill="#cfe0ff"/><circle cx="55" cy="17" r=".7" fill="#cfe0ff"/><circle cx="60" cy="21" r=".6" fill="#cfe0ff"/></svg>
</div><div id="tb2">
<svg class="abs" style="left:350px;top:10px" width="20" height="20" viewBox="0 0 20 20"><g fill="none" stroke="#fff" stroke-width="1.400"><rect x="3" y="5" width="10" height="10"/><path d="M1 2.500H15M1 17.500H15"/></g><rect x="15.500" y="6" width="2.400" height="2.400" fill="#fff"/><path d="M16.700 10v7" stroke="#fff" stroke-width="1.400"/><path d="M1 2v3M15 2v3M1 15v3M15 15v3" stroke="#fff" stroke-width="1.400"/></svg>
<svg class="abs" style="left:399px;top:8px" width="24" height="24" viewBox="0 0 48 48"><defs><linearGradient id="te1" x1="0" y1="0" x2="1" y2="1"><stop offset="0" stop-color="#2fc4c0"/><stop offset=".55" stop-color="#4bd07c"/><stop offset="1" stop-color="#86dd4a"/></linearGradient><linearGradient id="te2" x1="0" y1="0" x2="0" y2="1"><stop offset="0" stop-color="#2592dc"/><stop offset="1" stop-color="#0f5cae"/></linearGradient><linearGradient id="te3" x1="0" y1="0" x2="1" y2="0"><stop offset="0" stop-color="#15499a"/><stop offset="1" stop-color="#1a74cc"/></linearGradient></defs><path d="M24 0C37 0 48 9 48 22c0 8-6 13-13 13-5 0-9-2-9-5 0-2 2-3 2-6 0-5-5-9-11-9C9 15 3 21 0 27 0 12 10 0 24 0z" fill="url(#te1)"/><path d="M17 15c-9 0-17 8-17 16 1 10 10 17 21 17 4 0 8-1 11-3-12 2-20-6-20-14 0-6 4-11 9-13-1-2-2-3-4-3z" fill="url(#te2)"/><path d="M12 31c0 10 9 17 19 16 6-1 11-5 14-10-4 3-10 4-15 3-7-2-11-8-9-16-5 1-9 4-9 7z" fill="url(#te3)"/></svg>
<div class="abs" style="left:436px;top:0;width:48px;height:40px;background:#3a464d"></div>
<div class="abs" style="left:436px;top:38px;width:48px;height:2px;background:#7fbdf0"></div>
<svg class="abs" style="left:448px;top:10px" width="24" height="20" viewBox="0 0 24 20"><path d="M1 2q0-1 1-1h7l2 2h11q1 0 1 1v14H1z" fill="#e8b83a"/><rect x="1" y="5" width="22" height="13" rx=".8" fill="#f9d868"/><rect x="1" y="11" width="22" height="7" fill="#f2c84a"/><path d="M7 11h10v7h-3v-3.500h-4V18H7z" fill="#3f8fd8"/></svg>
<svg class="abs" style="left:497px;top:8px" width="24" height="24" viewBox="0 0 48 48"><defs><linearGradient id="tff" x1=".85" y1=".05" x2=".2" y2=".95"><stop offset="0" stop-color="#ffe14a"/><stop offset=".3" stop-color="#ffb02a"/><stop offset=".6" stop-color="#ff6a1e"/><stop offset="1" stop-color="#ef2a68"/></linearGradient><linearGradient id="tff2" x1=".2" y1="0" x2=".6" y2="1"><stop offset="0" stop-color="#ff9a1e"/><stop offset=".5" stop-color="#ff5a26"/><stop offset="1" stop-color="#f02a62"/></linearGradient><radialGradient id="tfp" cx=".5" cy=".4" r=".6"><stop offset="0" stop-color="#9a5cf0"/><stop offset="1" stop-color="#5a2fb8"/></radialGradient></defs><path d="M30 1C33 6 36 7 39 11c5 6 7 12 6.500 18C45 40 36 48.500 24 48.500S2.500 39.500 2.500 28c0-5 1-9 3.500-13 0 2 .5 3 1.500 4 .5-4 2-6 4.500-8 0 2 1 3 2 4 3-2 6-2.500 9-2-1-4 2-8 6-12z" fill="url(#tff)"/><circle cx="24.500" cy="26" r="10.500" fill="url(#tfp)"/><path d="M8 19c4-4 10-4.500 15-1.500 2 1.500 2 3 0 3.500-3 .5-5 2-5.500 4.500-.5 4 3 7.500 7.500 7 4.500-.5 8-4 8-8.500 0-2-.5-4-1.500-5 4 3 6 7 5.500 12-1 7-7 12-14 12-8 0-15-6-15.500-14-.2-4 .0-6.500 .5-9.500z" fill="url(#tff2)"/></svg>
<svg class="abs" style="left:546px;top:8px" width="24" height="24" viewBox="0 0 48 48"><rect x="0" y="4" width="48" height="13" rx="2" fill="#b8285a"/><rect x="0" y="4" width="48" height="4" rx="2" fill="#d44a78"/><rect x="0" y="17.500" width="48" height="13" rx="2" fill="#4a48c8"/><rect x="0" y="17.500" width="48" height="4" rx="2" fill="#6a6ae0"/><rect x="0" y="31" width="48" height="13" rx="2" fill="#1f8a34"/><rect x="0" y="31" width="48" height="4" rx="2" fill="#3aaa4e"/><rect x="4" y="5" width="3" height="11" fill="#f2d23a"/><rect x="4" y="18.500" width="3" height="11" fill="#f2d23a"/><rect x="4" y="32" width="3" height="11" fill="#f2d23a"/><rect x="18" y="3" width="12" height="42" rx="2" fill="#d98a2a"/><path d="M19 8q0-5 5-5t5 5v4H19z" fill="#e9a23c"/><rect x="15.500" y="17" width="17" height="13" rx="1.500" fill="none" stroke="#f4ead0" stroke-width="2.400"/><rect x="22.500" y="20" width="3" height="9" fill="#f4ead0"/></svg>
<div class="abs" style="left:538px;top:38px;width:40px;height:2px;background:#7fbdf0"></div>
<div class="abs" style="left:587px;top:38px;width:47px;height:2px;background:#7fbdf0"></div>
<svg class="abs" style="left:1072px;top:14px" width="14" height="10" viewBox="0 0 14 10"><path d="M1 8.500 7 2.500l6 6" fill="none" stroke="#fff" stroke-width="1.300"/></svg>
<svg class="abs" style="left:1096px;top:11px" width="16" height="18" viewBox="0 0 16 18"><g fill="none" stroke="#fff" stroke-width="1.100"><rect x="1.500" y="6" width="8" height="7" rx="1.500"/><path d="M9.500 8.500 14 6.500v6L9.500 10.500"/><path d="M3 4.500q0-3 4-3t4 3M3 14.500q0 2.500 4 2.500t4-2.500"/></g></svg>
<svg class="abs" style="left:1117px;top:11px" width="18" height="18" viewBox="0 0 18 18"><g fill="none" stroke="#fff" stroke-width="1.100"><rect x="5.500" y="3.500" width="11" height="8"/><path d="M8 14.500h6M11 11.500v3"/><rect x="1.500" y="1.500" width="4" height="5" fill="#000"/><path d="M3.500 6.500V15h3"/></g></svg>
<svg class="abs" style="left:1142px;top:11px" width="18" height="18" viewBox="0 0 18 18"><g fill="none" stroke="#fff" stroke-width="1.100"><path d="M1.500 6.500h3l4-3.500v12l-4-3.500h-3z"/><path d="M10.500 6.500q1.800 2.500 0 5M12.500 4.500q3 4.500 0 9M14.500 2.500q4.500 6.500 0 13"/></g></svg>
<div class="abs clk" style="top:4px">9:49 AM</div><div class="abs clk" style="top:22px">9/11/2024</div>
<svg class="abs" style="left:1238px;top:12px" width="18" height="18" viewBox="0 0 18 18"><path d="M1.500 1.500h15v11h-5.500l-2.500 3.500v-3.500H1.500z" fill="none" stroke="#fff" stroke-width="1.100"/></svg>
<div class="abs" style="left:1275px;top:0;width:1px;height:40px;background:#4a4a4a"></div>

</div>

</body>
</html>
